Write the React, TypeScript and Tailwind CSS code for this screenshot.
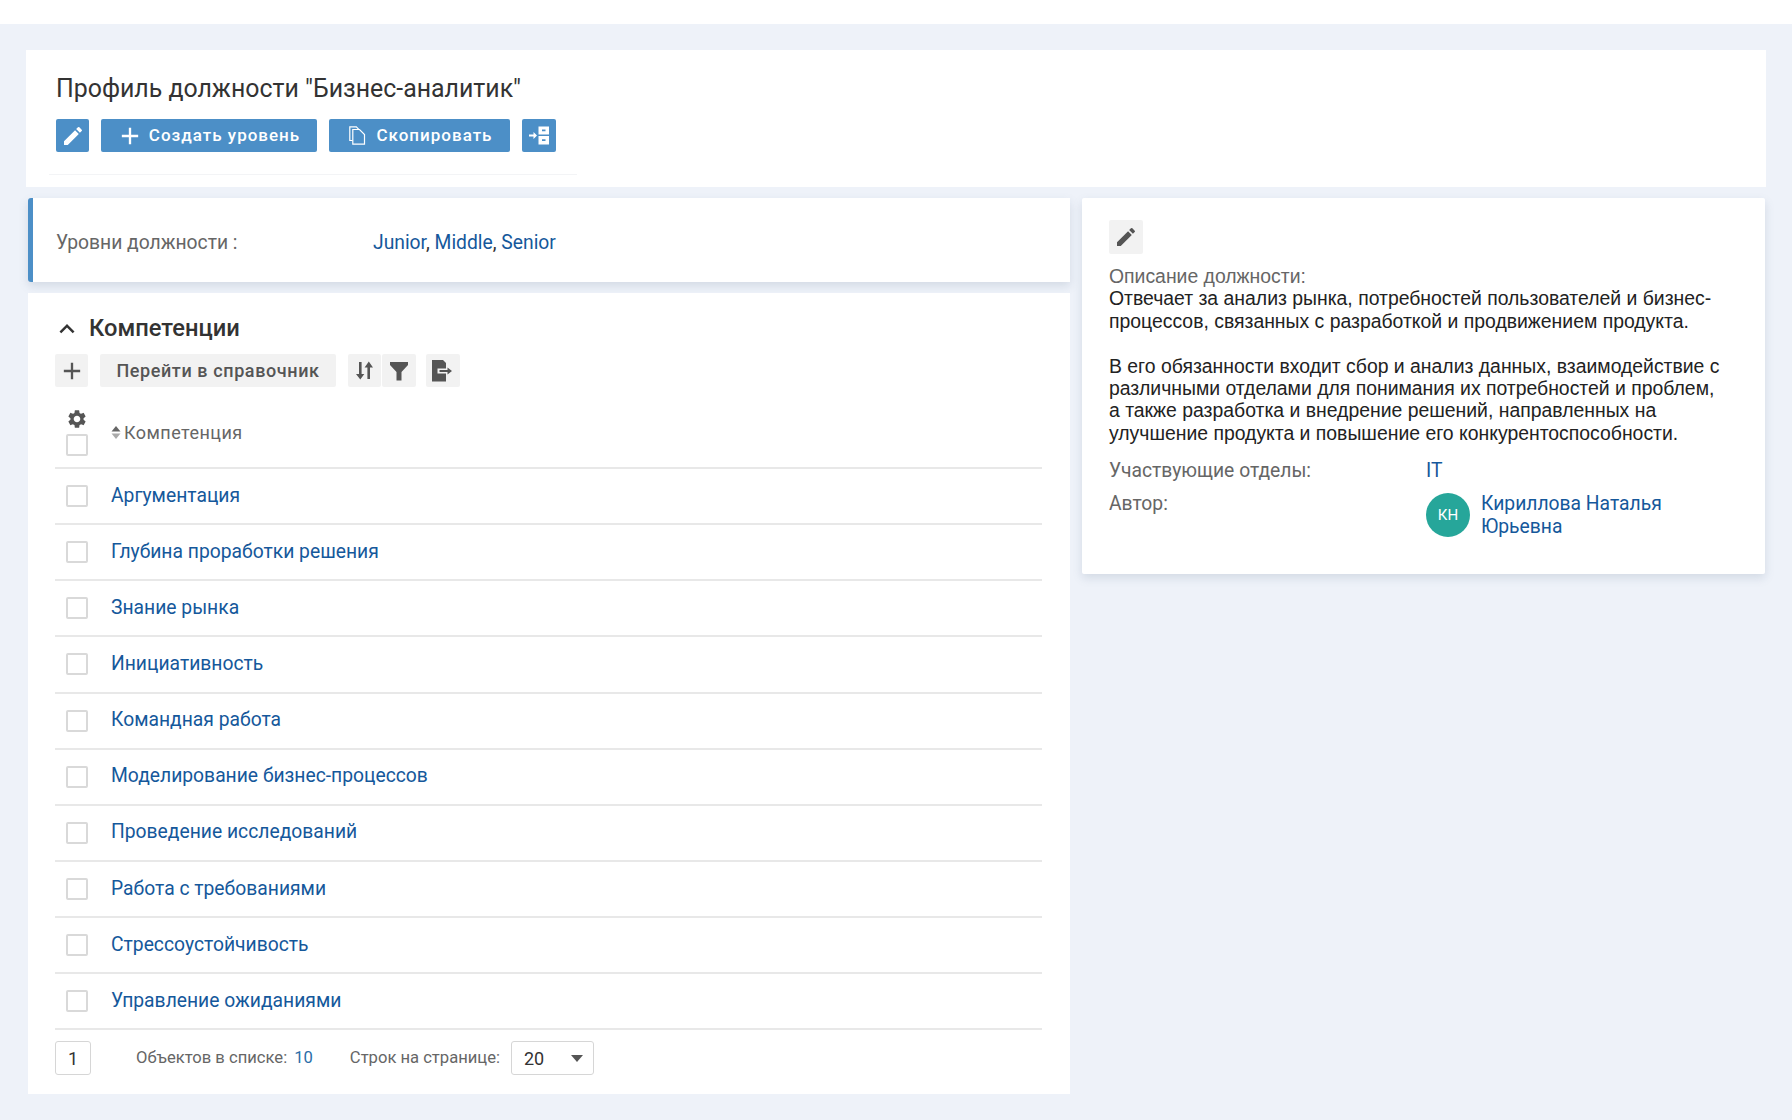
import { MdEdit, MdAdd, MdKeyboardArrowUp, MdSettings } from 'react-icons/md'

const competencies = [
  'Аргументация',
  'Глубина проработки решения',
  'Знание рынка',
  'Инициативность',
  'Командная работа',
  'Моделирование бизнес-процессов',
  'Проведение исследований',
  'Работа с требованиями',
  'Стрессоустойчивость',
  'Управление ожиданиями',
]

function Checkbox() {
  return <span className="block w-[22px] h-[22px] bg-white border-2 border-[#d9d9d9] rounded-[2px]" />
}

function CopyIcon() {
  return (
    <svg width="17" height="19" viewBox="0 0 17 19" fill="none" stroke="white" strokeWidth="1.2">
      <path d="M3.500 14.500H.800V.800h6.500l2.500 2.500" />
      <path d="M3.800 3.500h6.700l5 5v9.700H3.800z" />
    </svg>
  )
}

function MoveIcon() {
  return (
    <svg width="20" height="19" viewBox="0 0 20 19" fill="white">
      <path d="M0 8.600h4.500V6L8 9.500 4.500 13v-2.600H0z" />
      <path fillRule="evenodd" d="M9.500 .500H20v8H9.500zM13 3.500v1.800h3.500V3.500zM9.500 10H20v8.500H9.500zm3.500 3.200V15h3.500v-1.800z" />
    </svg>
  )
}

function SortIcon() {
  return (
    <svg width="17" height="19" viewBox="0 0 17 19" fill="#555">
      <path d="M3 1h2.600v12H8.300L4.300 18.500 0 13h3z" />
      <path d="M11.400 18H14V6.500h3L12.800.500 8.600 6.500h2.800z" />
    </svg>
  )
}

function FilterIcon() {
  return (
    <svg width="18" height="20" viewBox="0 0 18 20" fill="#555">
      <path d="M0 1h18v3l-6.500 7v8.500h-5V11L0 4z" />
    </svg>
  )
}

function ExportIcon() {
  return (
    <svg width="22" height="22" viewBox="0 0 22 22">
      <path d="M0 0h11l3 3v18.500H0z" fill="#555" />
      <path d="M5.500 8.500h8.500V5l8 6-8 6v-3.500H5.500z" fill="#f2f2f2" />
      <path d="M7.500 10h8V7.500L20 11l-4.500 3.500V12h-8z" fill="#555" />
    </svg>
  )
}

function GrayButton({ children, className }: { children: React.ReactNode; className: string }) {
  return (
    <button className={`h-[33px] flex items-center justify-center bg-[#f2f2f2] rounded-[2px] text-[#555] ${className}`}>
      {children}
    </button>
  )
}

function BlueButton({ children, className }: { children: React.ReactNode; className: string }) {
  return (
    <button className={`h-[33px] flex items-center justify-center bg-[#4c8fc7] rounded-[2px] text-white text-[17px] font-medium tracking-[1px] ${className}`}>
      {children}
    </button>
  )
}

export default function App() {
  return (
    <div className="h-[1120px] overflow-hidden bg-[#eef2f9] font-['Roboto',sans-serif] text-[#333]">
      <div className="h-6 bg-white" />

      <div className="mx-[26px] mt-[26px] h-[137px] bg-white pl-[30px] pt-[23px]">
        <h1 className="text-[24.9px] leading-[32px] font-normal text-[#333]">Профиль должности "Бизнес-аналитик"</h1>
        <div className="flex gap-3 mt-[14px]">
          <BlueButton className="w-[33px]"><MdEdit size={24} /></BlueButton>
          <BlueButton className="w-[216px] gap-[5px] pr-[2px]"><MdAdd size={28} />Создать уровень</BlueButton>
          <BlueButton className="w-[181px] gap-[11px] pl-[2px]"><CopyIcon />Скопировать</BlueButton>
          <BlueButton className="w-[34px]"><MoveIcon /></BlueButton>
        </div>
        <div className="mt-[22px] w-[528px] -ml-[7px] h-px bg-[#f3f4f6]" />
      </div>

      <div className="flex gap-3 ml-[28px] mr-[27px] mt-[11px] items-start">
        <div className="w-[1042px] flex flex-col gap-[11px]">
          <div className="h-[84px] bg-white border-l-[5px] border-[#4c8fc7] rounded-l-[3px] shadow-[0_4px_10px_rgba(90,110,140,0.18)] flex items-center pl-[23px] pt-[7px] text-[19.3px]">
            <span className="w-[317px] text-[#666]">Уровни должности :</span>
            <span className="text-[#15589b]">Junior<span className="text-[#333]">,</span> Middle<span className="text-[#333]">,</span> Senior</span>
          </div>

          <div className="h-[801px] bg-white pl-[27px] pr-[28px] pt-[17px]">
            <div className="flex items-center h-[38px]">
              <MdKeyboardArrowUp size={30} className="-ml-[3px] text-[#333]" />
              <span className="ml-[7px] text-[23.7px] font-medium text-[#333]">Компетенции</span>
            </div>
            <div className="flex mt-[6px] text-[18px] font-medium tracking-[0.6px]">
              <GrayButton className="w-[33px]"><MdAdd size={28} /></GrayButton>
              <GrayButton className="w-[236px] ml-3">Перейти в справочник</GrayButton>
              <GrayButton className="w-[33px] ml-3"><SortIcon /></GrayButton>
              <GrayButton className="w-[34px] ml-px"><FilterIcon /></GrayButton>
              <GrayButton className="w-[34px] ml-[10px]"><ExportIcon /></GrayButton>
            </div>

            <div className="flex h-[82px] border-b-2 border-[#e8e8e8]">
              <div className="w-[56px] pl-[11px] pt-[21px] flex flex-col">
                <MdSettings size={22} className="text-[#555]" />
                <span className="mt-[4px]"><Checkbox /></span>
              </div>
              <div className="flex items-center text-[18px] text-[#666] tracking-[0.45px] pt-[10px]">
                <svg width="10" height="15" viewBox="0 0 10 15" className="mr-[3px]">
                  <path d="M5 1l4.500 5.500H.500z" fill="#666" />
                  <path d="M5 14l4.500-5.500H.500z" fill="#aaa" />
                </svg>
                Компетенция
              </div>
            </div>

            {competencies.map((name) => (
              <div key={name} className="flex items-center h-[56.15px] border-b-2 border-[#e8e8e8]">
                <span className="ml-[11px] mr-[23px]"><Checkbox /></span>
                <span className="text-[#15589b] text-[19.3px]">{name}</span>
              </div>
            ))}

            <div className="flex items-center mt-[11px] text-[16.6px] text-[#666]">
              <span className="w-9 h-[34px] flex items-center justify-center bg-white border border-[#d6d6d6] rounded-[3px] text-[#333] text-[18px]">1</span>
              <span className="ml-[45px]">Объектов в списке:</span>
              <span className="ml-[7px] text-[#2a6da8]">10</span>
              <span className="ml-[37px]">Строк на странице:</span>
              <span className="ml-[11px] w-[83px] h-[34px] flex items-center justify-between pl-3 pr-[10px] border border-[#d6d6d6] rounded-[3px] text-[#333] text-[18px]">
                20
                <svg width="12" height="7" viewBox="0 0 12 7"><path d="M0 0h12L6 7z" fill="#555" /></svg>
              </span>
            </div>
          </div>
        </div>

        <div className="w-[683px] h-[376px] bg-white rounded-[2px] shadow-[0_4px_10px_rgba(90,110,140,0.18)] px-[27px] pt-[22px]">
          <GrayButton className="w-[34px] h-[34px]"><MdEdit size={24} /></GrayButton>
          <div className="mt-[11px] text-[19.4px] leading-[22.4px] font-['Liberation_Sans',sans-serif]">
            <div className="text-[#666]">Описание должности:</div>
            <div className="text-[#222]">
              Отвечает за анализ рынка, потребностей пользователей и бизнес-
              <br />процессов, связанных с разработкой и продвижением продукта.
              <br /><br />В его обязанности входит сбор и анализ данных, взаимодействие с
              <br />различными отделами для понимания их потребностей и проблем,
              <br />а также разработка и внедрение решений, направленных на
              <br />улучшение продукта и повышение его конкурентоспособности.
            </div>
          </div>
          <div className="flex mt-[15px] text-[19.3px] leading-[24px]">
            <span className="w-[317px] text-[#666]">Участвующие отделы:</span>
            <span className="text-[#15589b]">IT</span>
          </div>
          <div className="flex mt-[10px] text-[19.3px] leading-[22.4px]">
            <span className="w-[317px] text-[#666]">Автор:</span>
            <span className="w-11 h-11 rounded-full bg-[#26a69a] text-white text-[15px] flex items-center justify-center shrink-0">КН</span>
            <span className="ml-[11px] text-[#15589b]">Кириллова Наталья<br />Юрьевна</span>
          </div>
        </div>
      </div>
    </div>
  )
}
